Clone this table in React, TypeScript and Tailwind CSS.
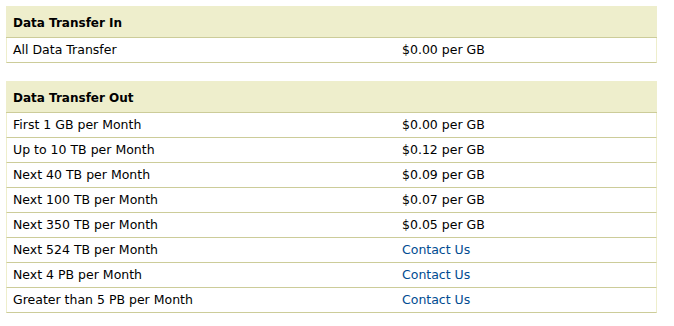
const inRows = [{ label: "All Data Transfer", price: "$0.00 per GB" }];

const outRows = [
  { label: "First 1 GB per Month", price: "$0.00 per GB" },
  { label: "Up to 10 TB per Month", price: "$0.12 per GB" },
  { label: "Next 40 TB per Month", price: "$0.09 per GB" },
  { label: "Next 100 TB per Month", price: "$0.07 per GB" },
  { label: "Next 350 TB per Month", price: "$0.05 per GB" },
  { label: "Next 524 TB per Month", price: "Contact Us", link: true },
  { label: "Next 4 PB per Month", price: "Contact Us", link: true },
  { label: "Greater than 5 PB per Month", price: "Contact Us", link: true },
];

type Row = { label: string; price: string; link?: boolean };

function PriceTable({ title, rows }: { title: string; rows: Row[] }) {
  return (
    <div className="w-[651px]">
      <div className="h-[32px] bg-[#eeeecc] border-b border-[#cccc99] flex items-center px-[7px] pt-[2px] font-bold text-[12px]">
        {title}
      </div>
      {rows.map((row) => (
        <div
          key={row.label}
          className="grid grid-cols-[389px_1fr] h-[25px] items-center pt-[1px] border-b border-[#cccc99] border-l border-r border-l-[#eeeecc] border-r-[#eeeecc] bg-white"
        >
          <span className="pl-[6px]">{row.label}</span>
          <span className={row.link ? "pl-[6px] text-[#004b91]" : "pl-[6px]"}>{row.price}</span>
        </div>
      ))}
    </div>
  );
}

export default function App() {
  return (
    <div className="w-[674px] h-[326px] bg-white pt-[6px] pl-[6px] text-[12.5px] text-black font-['DejaVu_Sans',Verdana,sans-serif] flex flex-col gap-[18px]">
      <PriceTable title="Data Transfer In" rows={inRows} />
      <PriceTable title="Data Transfer Out" rows={outRows} />
    </div>
  );
}
